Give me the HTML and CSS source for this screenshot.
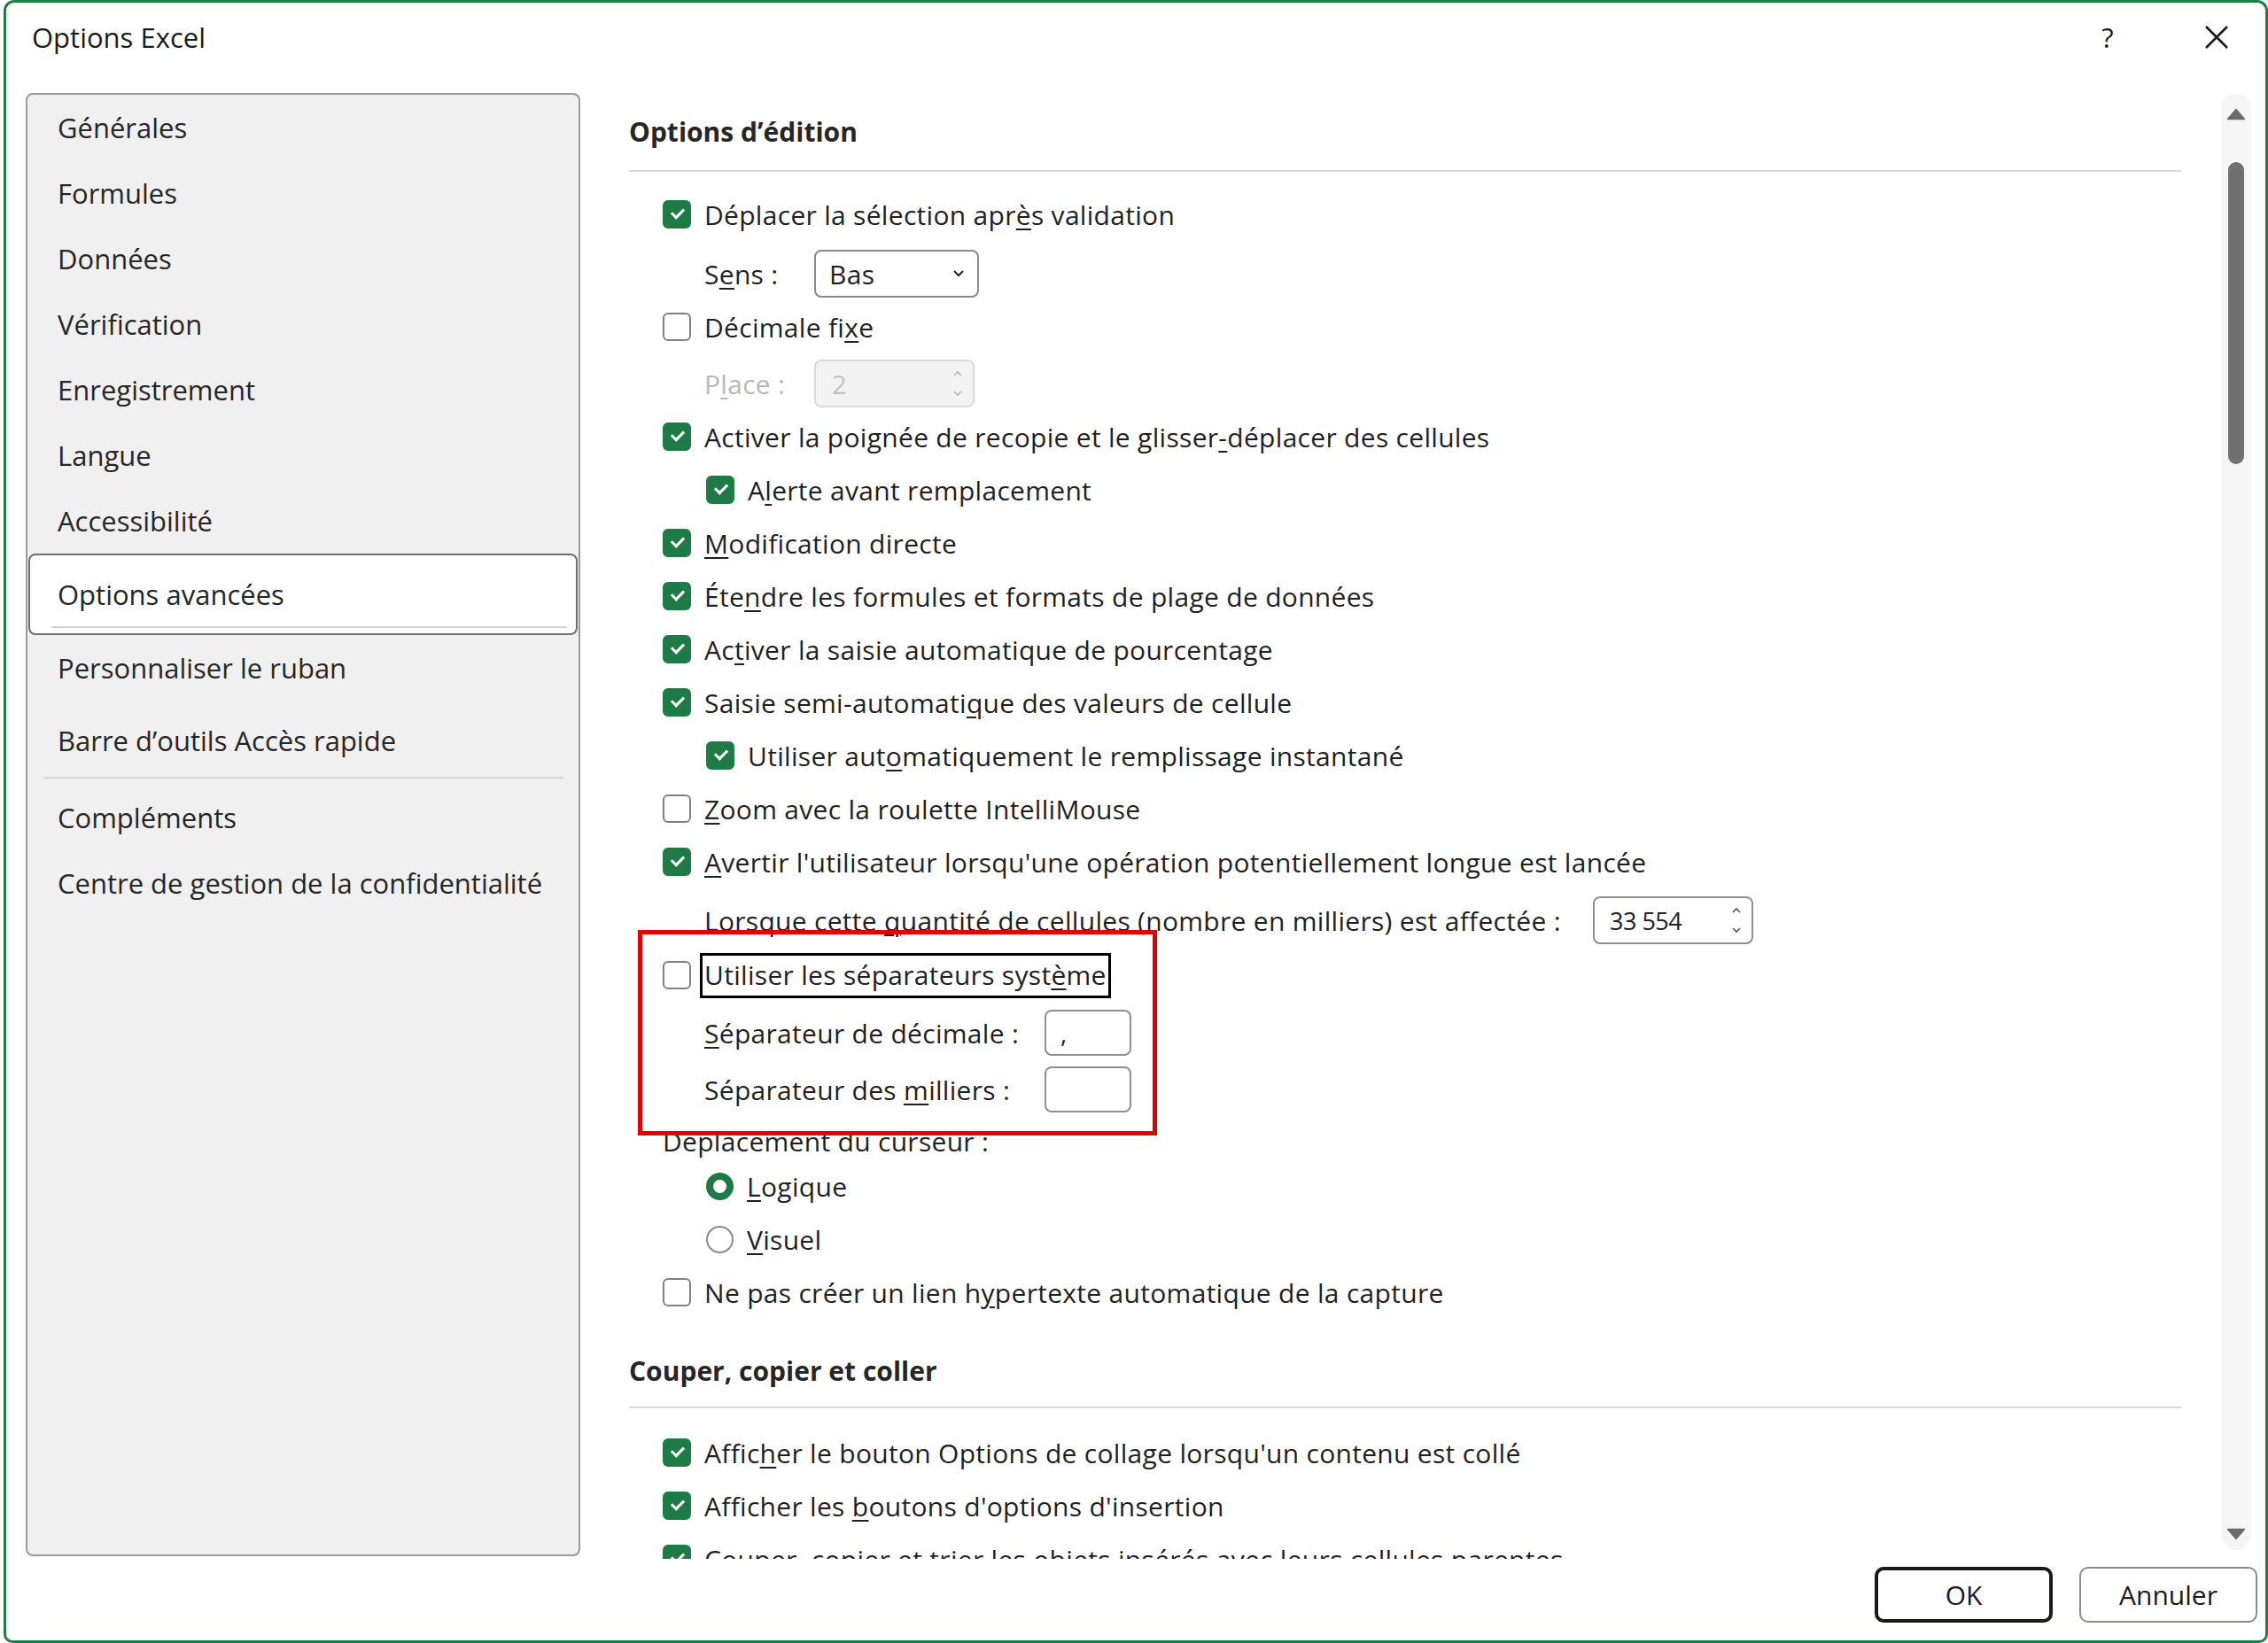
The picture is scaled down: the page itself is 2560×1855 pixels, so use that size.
FILE: index.html
```html
<!DOCTYPE html>
<html lang="fr">
<head>
    <meta charset="UTF-8">
    <title>Options Excel</title>
    <link rel="stylesheet" href="styles.css">
</head>
<body>
    <div class="window">
        <!-- Title bar -->
        <header class="titlebar">
            <span class="title">Options Excel</span>
            <span class="help">?</span>
            <span class="close">
                <svg width="30" height="30" viewBox="0 0 30 30"><path d="M3 3 L27 27 M27 3 L3 27" stroke="#1a1a1a" stroke-width="2.6" fill="none"/></svg>
            </span>
        </header>

        <div class="main">
            <!-- Category list -->
            <nav class="nav">
                <div class="nav-item">Générales</div>
                <div class="nav-item">Formules</div>
                <div class="nav-item">Données</div>
                <div class="nav-item">Vérification</div>
                <div class="nav-item">Enregistrement</div>
                <div class="nav-item">Langue</div>
                <div class="nav-item">Accessibilité</div>
                <div class="nav-item selected">Options avancées</div>
                <div class="nav-item">Personnaliser le ruban</div>
                <div class="nav-item spaced">Barre d’outils Accès rapide</div>
                <div class="nav-sep"></div>
                <div class="nav-item">Compléments</div>
                <div class="nav-item">Centre de gestion de la confidentialité</div>
            </nav>

            <!-- Options panel -->
            <section class="content">
                <div class="scroller">
                    <h2 class="section-title first">Options d’édition</h2>
                    <div class="section-rule first"></div>

                    <div class="row"><span class="cb on"></span><span>Déplacer la sélection apr<u>è</u>s validation</span></div>
                    <div class="row field mt7">
                        <span class="field-label w-short">S<u>e</u>ns&nbsp;:</span>
                        <span class="select">Bas
                            <svg width="14" height="10" viewBox="0 0 14 10"><path d="M2 2 L7 7 L12 2" stroke="#222" stroke-width="2" fill="none"/></svg>
                        </span>
                    </div>
                    <div class="row"><span class="cb"></span><span>Décimale fi<u>x</u>e</span></div>
                    <div class="row field mt4 disabled">
                        <span class="field-label w-short">P<u>l</u>ace&nbsp;:</span>
                        <span class="spin spin-place">2
                            <svg class="arrows" width="14" height="34" viewBox="0 0 14 34"><path d="M3 8 L7 4 L11 8 M3 26 L7 30 L11 26" stroke="#b5b5b5" stroke-width="1.6" fill="none"/></svg>
                        </span>
                    </div>
                    <div class="row"><span class="cb on"></span><span>Activer la poignée de recopie et le glisser<u>-</u>déplacer des cellules</span></div>
                    <div class="row sub"><span class="cb on"></span><span>A<u>l</u>erte avant remplacement</span></div>
                    <div class="row"><span class="cb on"></span><span><u>M</u>odification directe</span></div>
                    <div class="row"><span class="cb on"></span><span>Éte<u>n</u>dre les formules et formats de plage de données</span></div>
                    <div class="row"><span class="cb on"></span><span>Ac<u>t</u>iver la saisie automatique de pourcentage</span></div>
                    <div class="row"><span class="cb on"></span><span>Saisie semi-automati<u>q</u>ue des valeurs de cellule</span></div>
                    <div class="row sub"><span class="cb on"></span><span>Utiliser aut<u>o</u>matiquement le remplissage instantané</span></div>
                    <div class="row"><span class="cb"></span><span><u>Z</u>oom avec la roulette IntelliMouse</span></div>
                    <div class="row"><span class="cb on"></span><span><u>A</u>vertir l'utilisateur lorsqu'une opération potentiellement longue est lancée</span></div>
                    <div class="row field mt6">
                        <span class="field-label w-long">Lorsque cette <u>q</u>uantité de cellules (nombre en milliers) est affectée&nbsp;:</span>
                        <span class="spin">33 554
                            <svg class="arrows" width="14" height="34" viewBox="0 0 14 34"><path d="M3 8 L7 4 L11 8 M3 26 L7 30 L11 26" stroke="#555" stroke-width="1.6" fill="none"/></svg>
                        </span>
                    </div>
                    <div class="row mt2"><span class="cb"></span><span class="focus">Utiliser les séparateurs syst<u>è</u>me</span></div>
                    <div class="row field mt5">
                        <span class="field-label w-sep"><u>S</u>éparateur de décimale&nbsp;:</span>
                        <span class="text-input">,</span>
                    </div>
                    <div class="row field mt4">
                        <span class="field-label w-sep">Séparateur des <u>m</u>illiers&nbsp;:</span>
                        <span class="text-input"></span>
                    </div>
                    <div class="row mtn2">Déplacement du curseur&nbsp;:</div>
                    <div class="row sub mtn9"><span class="radio on"></span><span><u>L</u>ogique</span></div>
                    <div class="row sub"><span class="radio"></span><span><u>V</u>isuel</span></div>
                    <div class="row"><span class="cb"></span><span>Ne pas créer un lien h<u>y</u>pertexte automatique de la capture</span></div>

                    <h2 class="section-title">Couper, copier et coller</h2>
                    <div class="section-rule"></div>

                    <div class="row"><span class="cb on"></span><span>Affic<u>h</u>er le bouton Options de collage lorsqu'un contenu est collé</span></div>
                    <div class="row"><span class="cb on"></span><span>Afficher les <u>b</u>outons d'options d'insertion</span></div>
                    <div class="row"><span class="cb on"></span><span>Couper, copier et trier les objets insérés avec leurs cellules parentes</span></div>
                </div>

                <div class="vscroll">
                    <svg width="22" height="14" viewBox="0 0 22 14"><path d="M11 1.5 L20.5 12.5 L1.5 12.5 Z" fill="#6b6b6b" stroke="#6b6b6b" stroke-width="1.5" stroke-linejoin="round"/></svg>
                    <div class="thumb"></div>
                    <div class="track-fill"></div>
                    <svg width="22" height="14" viewBox="0 0 22 14"><path d="M1.5 1.5 L20.5 1.5 L11 12.5 Z" fill="#6b6b6b" stroke="#6b6b6b" stroke-width="1.5" stroke-linejoin="round"/></svg>
                </div>

                <!-- annotation drawn over the screenshot -->
                <div class="highlight"></div>
            </section>
        </div>

        <footer class="footer">
            <button class="btn default">OK</button>
            <button class="btn">Annuler</button>
        </footer>
    </div>
</body>
</html>
```

FILE: styles.css
```css
html, body {
    margin: 0;
    padding: 0;
    height: 100%;
}

body {
    background: #fff;
    font-family: "Open Sans", "Noto Sans", sans-serif;
    color: #1f1f1f;
    overflow: hidden;
}

u {
    text-decoration-thickness: 2px;
    text-underline-offset: 4px;
}

.window {
    margin-left: 4px;
    height: 1855px;
    box-sizing: border-box;
    border: 3px solid #1f7d45;
    border-radius: 12px 12px 10px 10px;
    display: flex;
    flex-direction: column;
    background: #fff;
}

/* Title bar */
.titlebar {
    height: 102px;
    flex: none;
    box-sizing: border-box;
    padding: 0 33px 24px 29px;
    display: flex;
    align-items: center;
}

.title {
    font-size: 31px;
    color: #1a1a1a;
    flex: 1;
}

.help {
    width: 44px;
    text-align: center;
    font-size: 31px;
    color: #1a1a1a;
    margin-right: 79px;
}

.close {
    width: 44px;
    display: flex;
    justify-content: center;
}

.main {
    flex: 1;
    display: flex;
    min-height: 0;
}

/* Left navigation */
.nav {
    width: 626px;
    height: 1652px;
    flex: none;
    margin-left: 22px;
    box-sizing: border-box;
    background: #f0f0f0;
    border: 2px solid #9a9a9a;
    border-radius: 8px;
    padding: 0 1px;
}

.nav-item {
    height: 74px;
    display: flex;
    align-items: center;
    padding-left: 33px;
    font-size: 31px;
    color: #262626;
    white-space: nowrap;
}

.nav-item.selected {
    height: 92px;
    box-sizing: border-box;
    background: #fff;
    border: 2px solid #6e6e6e;
    border-radius: 8px;
    padding-left: 31px;
    position: relative;
}

.nav-item.selected::after {
    content: "";
    position: absolute;
    left: 24px;
    right: 10px;
    bottom: 6px;
    height: 2px;
    background: #d4d4d4;
}

.nav-item.spaced {
    margin-top: 8px;
}

.nav-sep {
    height: 2px;
    background: #d6d6d6;
    margin: 4px 16px 7px 18px;
}

/* Options panel */
.content {
    flex: 1;
    display: flex;
    position: relative;
    min-width: 0;
}

.scroller {
    flex: 1;
    height: 1655px;
    overflow: hidden;
    padding-left: 55px;
    margin-right: 45px;
}

.section-title {
    margin: 37px 0 0 0;
    height: 44px;
    line-height: 44px;
    font-size: 30px;
    font-weight: 700;
    color: #262626;
}

.section-title.first {
    margin-top: 22px;
}

.section-rule {
    height: 2px;
    background: #d9d9d9;
    margin: 18px 0 20px 0;
}

.section-rule.first {
    margin: 21px 0 18px 0;
}

.row {
    height: 60px;
    display: flex;
    align-items: center;
    gap: 15px;
    padding-left: 38px;
    font-size: 30px;
    letter-spacing: 0.3px;
    white-space: nowrap;
    color: #1f1f1f;
}

.row.sub {
    padding-left: 87px;
}

.row.field {
    padding-left: 85px;
    gap: 0;
}

.mt2 { margin-top: 2px; }
.mt4 { margin-top: 4px; }
.mt5 { margin-top: 5px; }
.mt6 { margin-top: 6px; }
.mt7 { margin-top: 7px; }
.mtn2 { margin-top: -2px; }
.mtn9 { margin-top: -9px; }

.field-label.w-short { width: 124px; }
.field-label.w-sep { width: 384px; }
.field-label.w-long { width: 1003px; }

.disabled .field-label {
    color: #b8b8b8;
}

/* checkboxes and radios */
.cb {
    width: 32px;
    height: 32px;
    flex: none;
    box-sizing: border-box;
    border: 2px solid #808080;
    border-radius: 6px;
    background: #fff;
    position: relative;
}

.cb.on {
    background: #1e7b46;
    border-color: #1e7b46;
}

.cb.on::after {
    content: "";
    position: absolute;
    left: 8px;
    top: 7px;
    width: 11px;
    height: 6px;
    border-left: 3px solid #fff;
    border-bottom: 3px solid #fff;
    transform: rotate(-45deg);
}

.radio {
    width: 31px;
    height: 31px;
    flex: none;
    box-sizing: border-box;
    border: 2px solid #8a8a8a;
    border-radius: 50%;
    background: #fff;
}

.radio.on {
    border: 8px solid #1e7b46;
}

/* keyboard focus rectangle */
.focus {
    outline: 3px solid #000;
    outline-offset: 0;
    padding: 1px 2px 3px 2px;
    margin-left: -2px;
}

/* form controls */
.select {
    width: 186px;
    height: 54px;
    box-sizing: border-box;
    border: 2px solid #8a8a8a;
    border-radius: 8px;
    display: flex;
    align-items: center;
    justify-content: space-between;
    padding: 0 14px 0 15px;
    font-size: 30px;
}

.spin {
    width: 181px;
    height: 54px;
    box-sizing: border-box;
    border: 2px solid #8f8f8f;
    border-radius: 8px;
    display: flex;
    align-items: center;
    justify-content: space-between;
    padding: 0 10px 0 17px;
    font-size: 27px;
    letter-spacing: -0.5px;
    color: #222;
}

.spin-place {
    background: #f3f3f3;
    border-color: #dadada;
    color: #c2c2c2;
    padding-left: 18px;
    font-size: 29px;
}

.text-input {
    width: 98px;
    height: 52px;
    box-sizing: border-box;
    border: 2px solid #8f8f8f;
    border-radius: 8px;
    padding-left: 16px;
    display: flex;
    align-items: center;
    font-size: 28px;
}

/* vertical scrollbar */
.vscroll {
    width: 34px;
    height: 1644px;
    flex: none;
    margin: 1px 16px 0 0;
    background: #f6f6f6;
    border-radius: 17px;
    display: flex;
    flex-direction: column;
    align-items: center;
    padding: 16px 0 11px 0;
    box-sizing: border-box;
}

.vscroll .thumb {
    width: 18px;
    height: 341px;
    margin-top: 47px;
    background: #707070;
    border-radius: 9px;
    flex: none;
}

.vscroll .track-fill {
    flex: 1;
}

.highlight {
    position: absolute;
    left: 65px;
    top: 945px;
    width: 586px;
    height: 232px;
    box-sizing: border-box;
    border: 5px solid #e40000;
    pointer-events: none;
}

/* bottom buttons */
.footer {
    height: 90px;
    flex: none;
    display: flex;
    justify-content: flex-end;
    align-items: flex-start;
    gap: 30px;
    padding: 7px 9px 0 0;
    box-sizing: border-box;
}

.btn {
    width: 201px;
    height: 63px;
    background: #fff;
    border: 2px solid #8c8c8c;
    border-radius: 10px;
    font-family: "Open Sans", "Noto Sans", sans-serif;
    font-size: 30px;
    color: #1a1a1a;
    padding: 0;
}

.btn.default {
    border: 4px solid #1a1a1a;
}
```
